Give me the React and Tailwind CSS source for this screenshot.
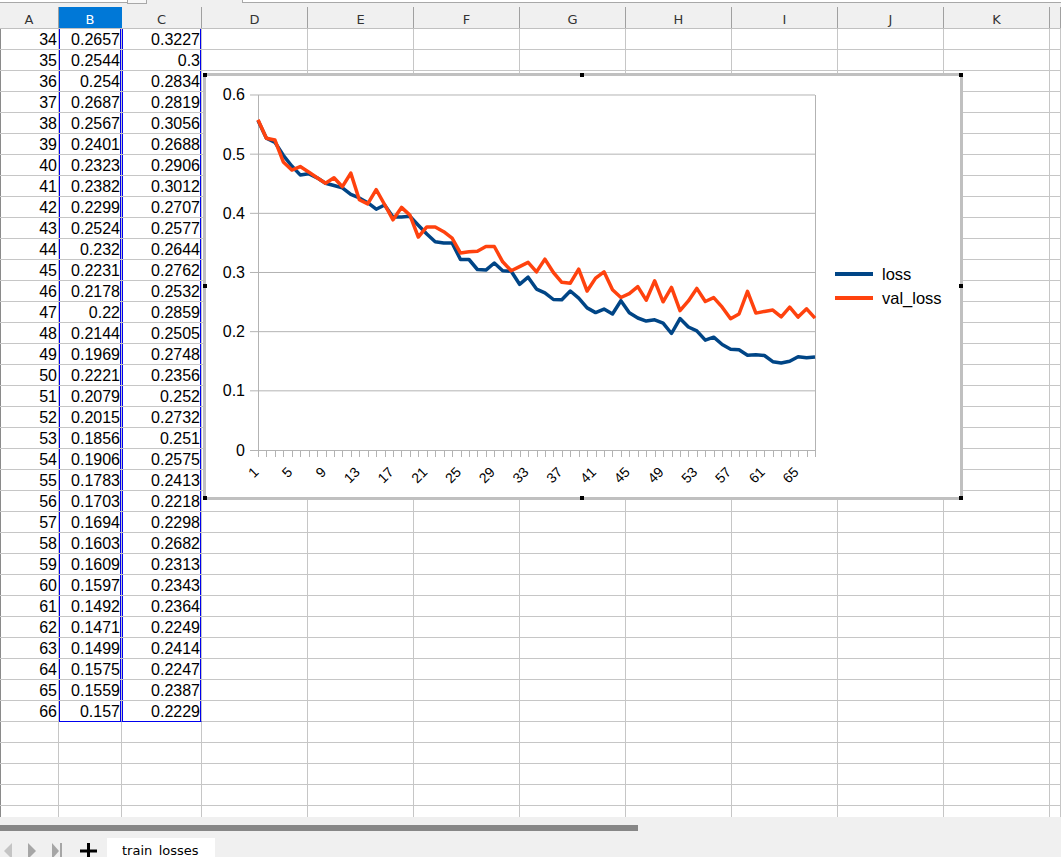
import React from "react";

// rows 34..66 as shown in the sheet
const tableB = ["0.2657","0.2544","0.254","0.2687","0.2567","0.2401","0.2323","0.2382","0.2299","0.2524","0.232","0.2231","0.2178","0.22","0.2144","0.1969","0.2221","0.2079","0.2015","0.1856","0.1906","0.1783","0.1703","0.1694","0.1603","0.1609","0.1597","0.1492","0.1471","0.1499","0.1575","0.1559","0.157"];
const tableC = ["0.3227","0.3","0.2834","0.2819","0.3056","0.2688","0.2906","0.3012","0.2707","0.2577","0.2644","0.2762","0.2532","0.2859","0.2505","0.2748","0.2356","0.252","0.2732","0.251","0.2575","0.2413","0.2218","0.2298","0.2682","0.2313","0.2343","0.2364","0.2249","0.2414","0.2247","0.2387","0.2229"];

// epochs 0..33 (scrolled out of view)
const lossHead = [0.557,0.527,0.52,0.498,0.48,0.465,0.467,0.46,0.451,0.447,0.443,0.432,0.426,0.418,0.407,0.414,0.394,0.394,0.395,0.38,0.365,0.352,0.35,0.35,0.322,0.322,0.305,0.304,0.316,0.303,0.302,0.28,0.292,0.272];
const valHead = [0.558,0.527,0.524,0.487,0.473,0.479,0.47,0.46,0.451,0.46,0.445,0.468,0.423,0.416,0.44,0.415,0.389,0.41,0.397,0.36,0.377,0.377,0.369,0.358,0.333,0.335,0.336,0.344,0.344,0.318,0.303,0.31,0.317,0.301];

const loss = [...lossHead, ...tableB.map(Number)];
const valLoss = [...valHead, ...tableC.map(Number)];

const cols = ["A","B","C","D","E","F","G","H","I","J","K",""];
const widths = ["w-[59px]","w-[63px]","w-[80px]","w-[106px]","w-[106px]","w-[106px]","w-[106px]","w-[106px]","w-[106px]","w-[106px]","w-[106px]","flex-1"];

const X0 = 258, X1 = 815, Y0 = 450, PY = 591.67;
const step = (X1 - X0) / 66;
const px = (i) => X0 + i * step;
const py = (v) => Y0 - v * PY;
const toPoints = (arr) => arr.map((v, i) => `${px(i).toFixed(1)},${py(v).toFixed(1)}`).join(" ");

const handles = [[0, 0], [377, 0], [756, 0], [0, 211], [756, 211], [0, 423], [377, 423], [756, 423]];

function Chart() {
    const labels = [];
    for (let n = 1; n <= 65; n += 4) labels.push(n);
    return (
        <div className="absolute left-[203px] top-[73px] w-[760px] h-[427px] border-[3px] border-[#c0c0c0] bg-white">
            <svg width="754" height="421" viewBox="206 76 754 421" className="block">
                {[0.1, 0.2, 0.3, 0.4, 0.5, 0.6].map(v => (
                    <line key={v} x1="250" x2={X1} y1={py(v)} y2={py(v)} stroke="#b3b3b3" strokeWidth="1" />
                ))}
                <line x1="250" x2={X1} y1={Y0 + 0.5} y2={Y0 + 0.5} stroke="#b3b3b3" strokeWidth="1" />
                <line x1={X0 + 0.5} x2={X0 + 0.5} y1="95" y2={Y0} stroke="#b3b3b3" strokeWidth="1" />
                <line x1={X1 + 0.5} x2={X1 + 0.5} y1="95" y2={Y0} stroke="#b3b3b3" strokeWidth="1" />
                {loss.map((_, i) => (
                    <line key={i} x1={Math.round(px(i)) + 0.5} x2={Math.round(px(i)) + 0.5} y1={Y0} y2={Y0 + 7} stroke="#b3b3b3" strokeWidth="1" />
                ))}
                {["0", "0.1", "0.2", "0.3", "0.4", "0.5", "0.6"].map(t => (
                    <text key={t} x="245" y={py(Number(t)) + 5.5} textAnchor="end" fontSize="16" fontFamily="Liberation Sans, Arial, sans-serif" fill="#000">{t}</text>
                ))}
                {labels.map(n => {
                    const ax = px(n - 1) + 1.5;
                    const ay = 473;
                    return (
                        <text key={n} x={ax} y={ay} textAnchor="end" fontSize="14" fontFamily="Liberation Sans, Arial, sans-serif" fill="#000" transform={`rotate(-45 ${ax} ${ay})`}>{n}</text>
                    );
                })}
                <polyline points={toPoints(loss)} fill="none" stroke="#004586" strokeWidth="3.5" strokeLinejoin="round" />
                <polyline points={toPoints(valLoss)} fill="none" stroke="#ff420e" strokeWidth="3.5" strokeLinejoin="round" />
                <line x1="835" x2="873" y1="274" y2="274" stroke="#004586" strokeWidth="4" />
                <line x1="835" x2="873" y1="298" y2="298" stroke="#ff420e" strokeWidth="4" />
                <text x="882" y="280" fontSize="16.5" fontFamily="Liberation Sans, Arial, sans-serif" fill="#000">loss</text>
                <text x="882" y="304" fontSize="16.5" fontFamily="Liberation Sans, Arial, sans-serif" fill="#000">val_loss</text>
            </svg>
            {/* selection handles over the frame */}
            <svg width="760" height="427" className="absolute -left-[3px] -top-[3px] pointer-events-none">
                {handles.map(([x, y]) => (
                    <rect key={`${x}-${y}`} x={x} y={y} width="4" height="4" fill="#000" />
                ))}
            </svg>
        </div>
    );
}

function DataRow({ epoch }) {
    const idx = epoch - 34;
    const hasData = idx >= 0 && idx < tableB.length;
    const last = idx === tableB.length - 1;
    const bBlue = hasData ? "shadow-[inset_1px_0_0_#0000ee,inset_-1px_0_0_#0000ee]" : "";
    return (
        <div className="flex h-[21px]">
            {cols.map((c, ci) => {
                let text = "";
                if (hasData) {
                    if (ci === 0) text = String(epoch);
                    if (ci === 1) text = tableB[idx];
                    if (ci === 2) text = tableC[idx];
                }
                const blue = (ci === 1 || ci === 2) ? bBlue : "";
                const bottom = last && (ci === 1 || ci === 2) ? "border-b-[#0000ee]" : "border-b-[#c6c6c6]";
                const left = ci === 0 ? "shadow-[inset_1px_0_0_#8a8a8a]" : "";
                return (
                    <div key={ci} className={`${widths[ci]} shrink-0 h-full border-b border-r border-r-[#c6c6c6] ${bottom} ${blue} ${left} text-right pr-[1px] pt-[1px] text-[16px] leading-[19px] text-black font-['Liberation_Sans',Arial,sans-serif]`}>
                        {text}
                    </div>
                );
            })}
        </div>
    );
}

export default function App() {
    const epochs = [];
    for (let e = 34; e <= 71; e++) epochs.push(e);
    return (
        <div className="relative w-[1061px] h-[857px] overflow-hidden bg-white">
            {/* formula bar remnants */}
            <div className="flex h-[7px] bg-[#f0f0f0]">
                <div className="w-[127px] h-[3px] bg-white border-b border-[#a8a8a8]"></div>
                <div className="w-[20px] h-[4px] bg-[#f7f7f7] border border-t-0 border-[#a8a8a8]"></div>
                <div className="w-[95px]"></div>
                <div className="flex-1 h-[3px] bg-white border-b border-l border-[#a8a8a8]"></div>
            </div>
            {/* column headers */}
            <div className="flex h-[22px] bg-[#f0f0f0] border-b border-[#c0c0c0]">
                {cols.map((c, ci) => (
                    <div key={ci} className={`${widths[ci]} shrink-0 h-full flex items-center justify-center pt-[4px] border-r text-[13px] font-['DejaVu_Sans',sans-serif] ${ci === 1 ? "bg-[#0078d7] text-white border-[#0078d7]" : "text-[#333] border-[#a0a0a0]"}`}>
                        {c}
                    </div>
                ))}
            </div>
            {/* cells */}
            <div className="h-[788px] overflow-hidden">
                {epochs.map(e => <DataRow key={e} epoch={e} />)}
            </div>
            {/* sheet tabs */}
            <div className="h-[40px] bg-[#f0f0f0] overflow-hidden">
                <div className="mt-[8px] h-[6px] w-[638px] bg-[#878787]"></div>
                <div className="mt-[7px] flex items-start">
                    <svg width="100" height="22" viewBox="0 0 100 22" className="shrink-0">
                        <polygon points="12,5 12,21 4,13" fill="#c4c4c4" />
                        <polygon points="28,5 28,21 36,13" fill="#a6a6a6" />
                        <polygon points="52,5 52,21 59,13" fill="#a6a6a6" />
                        <rect x="60" y="5" width="2" height="16" fill="#a6a6a6" />
                        <rect x="80" y="11.5" width="17" height="3" fill="#000" />
                        <rect x="87" y="5" width="3" height="17" fill="#000" />
                    </svg>
                    <div className="ml-[7px] w-[108px] h-[22px] bg-white pl-[15px] pt-[4px] text-[13px] leading-[17px] text-black font-['DejaVu_Sans',sans-serif]">
                        train_losses
                    </div>
                </div>
            </div>
            <Chart />
        </div>
    );
}
